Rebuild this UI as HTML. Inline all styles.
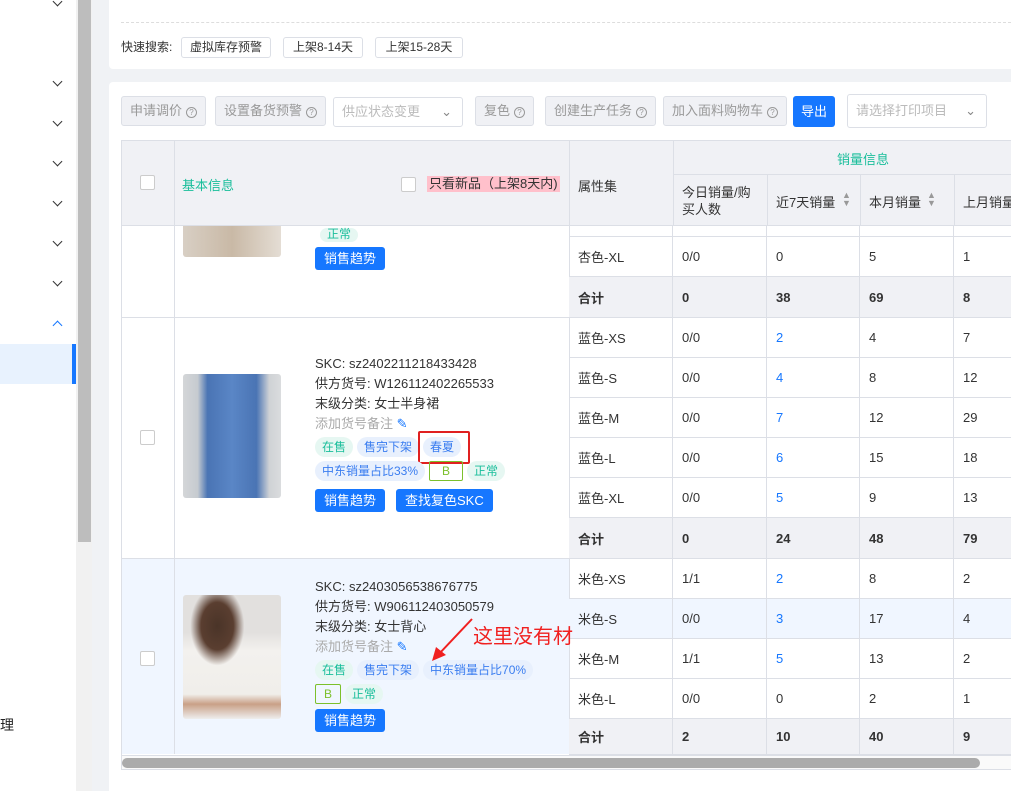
<!DOCTYPE html>
<html><head><meta charset="utf-8"><style>
*{box-sizing:border-box;margin:0;padding:0}
body{width:1011px;height:791px;overflow:hidden;position:relative;background:#f0f2f5;font-family:"Liberation Sans","Noto Sans CJK SC",sans-serif;font-size:13px;color:#333}
.a{position:absolute;white-space:nowrap}
.side{left:0;top:0;width:76px;height:791px;background:#fff}
.chev{position:absolute;left:54px;width:7px;height:7px;border-right:1.5px solid #333;border-bottom:1.5px solid #333;transform:rotate(45deg)}
.btn{position:absolute;height:30px;border:1px solid #dcdfe6;border-radius:3px;background:#f0f1f5;color:#999;line-height:28px;padding:0 8px;font-size:13px;white-space:nowrap}
.q{display:inline-block;width:11px;height:11px;border:1px solid #999;border-radius:50%;font-size:8px;line-height:9px;text-align:center;margin-left:4px;vertical-align:0}
.qb{position:absolute;top:37px;height:21px;border:1px solid #dcdfe6;border-radius:3px;line-height:19px;padding:0 6px;color:#333;background:#fff;white-space:nowrap;font-size:12px;text-align:center}
.r{position:absolute;left:569px;width:442px;display:flex;border-bottom:1px solid #dcdfe6}
.r div{border-right:1px solid #dcdfe6;padding-left:9px;display:flex;align-items:center;overflow:hidden;white-space:nowrap}
.r div:nth-child(1){width:104px}.r div:nth-child(2){width:94px}.r div:nth-child(3){width:93px}.r div:nth-child(4){width:94px}.r div:nth-child(5){width:57px;border-right:0}
.t{background:#f0f1f5;font-weight:bold}
.bl{color:#1677ff}
.cb{position:absolute;width:15px;height:15px;border:1px solid #ccc;background:#fff;border-radius:2px}
.tag{display:inline-block;height:20px;line-height:20px;border-radius:10px;padding:0 7px;font-size:12px;margin-right:4px}
.g{background:#e6f7f2;color:#19be9b}.b{background:#e8f0fd;color:#3a7df0}
.pb{display:inline-block;height:23px;line-height:23px;background:#1677ff;color:#fff;border-radius:3px;padding:0 9px;font-size:13px;margin-right:8px}
.info{position:absolute;left:315px;line-height:20px;font-size:13px}
.vl{position:absolute;width:1px;background:#dcdfe6}
</style></head><body>
<div class="a side"></div>
<div class="chev" style="top:-2px"></div>
<div class="chev" style="top:78px"></div>
<div class="chev" style="top:118px"></div>
<div class="chev" style="top:158px"></div>
<div class="chev" style="top:198px"></div>
<div class="chev" style="top:238px"></div>
<div class="chev" style="top:278px"></div>
<div class="chev" style="top:322px;transform:rotate(-135deg);border-color:#1677ff"></div>
<div class="a" style="left:0;top:344px;width:76px;height:40px;background:#e8f2fe;border-right:4px solid #1677ff"></div>
<div class="a" style="left:0;top:715px;font-size:14px;color:#222">理</div>
<div class="a" style="left:76px;top:0;width:16px;height:791px;background:#f1f1f1"></div>
<div class="a" style="left:78px;top:0;width:13px;height:542px;background:#bdbdbd"></div>

<div class="a" style="left:109px;top:0;width:902px;height:69px;background:#fff;border-radius:0 0 0 4px"></div>
<div class="a" style="left:121px;top:22px;width:890px;border-top:1px dashed #ddd"></div>
<div class="a" style="left:121px;top:39px;line-height:16px;font-size:12px">快速搜索:</div>
<div class="qb" style="left:181px;width:90px">虚拟库存预警</div>
<div class="qb" style="left:283px;width:80px">上架8-14天</div>
<div class="qb" style="left:375px;width:88px">上架15-28天</div>

<div class="a" style="left:109px;top:82px;width:902px;height:709px;background:#fff;border-radius:4px 0 0 0"></div>
<div class="btn" style="left:121px;top:96px">申请调价<span class="q">?</span></div>
<div class="btn" style="left:215px;top:96px">设置备货预警<span class="q">?</span></div>
<div class="btn" style="left:333px;top:97px;width:130px;background:#fff;color:#bbb">供应状态变更<span style="position:absolute;right:10px;color:#888">⌄</span></div>
<div class="btn" style="left:475px;top:96px">复色<span class="q">?</span></div>
<div class="btn" style="left:545px;top:96px">创建生产任务<span class="q">?</span></div>
<div class="btn" style="left:663px;top:96px">加入面料购物车<span class="q">?</span></div>
<div class="a" style="left:793px;top:96px;width:42px;height:31px;background:#1677ff;color:#fff;border-radius:3px;line-height:31px;text-align:center">导出</div>
<div class="btn" style="left:847px;top:94px;width:140px;height:34px;line-height:32px;background:#fff;color:#bbb">请选择打印项目<span style="position:absolute;right:10px;color:#888">⌄</span></div>

<!-- table -->
<div class="a" style="left:121px;top:140px;width:890px;height:630px;border:1px solid #dcdfe6;border-right:0"></div>
<div class="a" style="left:122px;top:141px;width:889px;height:85px;background:#f0f1f5;border-bottom:1px solid #dcdfe6"></div>
<div class="a" style="left:122px;top:558px;width:447px;height:196px;background:#f0f6ff"></div>
<div class="vl" style="left:174px;top:141px;height:613px"></div>
<div class="vl" style="left:569px;top:141px;height:613px"></div>
<div class="vl" style="left:673px;top:141px;height:85px"></div>
<div class="a" style="left:673px;top:174px;width:338px;border-top:1px solid #dcdfe6"></div>
<div class="vl" style="left:767px;top:174px;height:52px"></div>
<div class="vl" style="left:860px;top:174px;height:52px"></div>
<div class="vl" style="left:954px;top:174px;height:52px"></div>
<div class="cb" style="left:140px;top:175px"></div>
<div class="a" style="left:182px;top:175px;color:#19be9b">基本信息</div>
<div class="cb" style="left:401px;top:177px"></div>
<div class="a" style="left:427px;top:176px;background:#ffc0cb;padding:0 2px;line-height:16px">只看新品（上架8天内)</div>
<div class="a" style="left:578px;top:176px">属性集</div>
<div class="a" style="left:837px;top:149px;color:#19be9b">销量信息</div>
<div class="a" style="left:682px;top:184px;line-height:17px">今日销量/购<br>买人数</div>
<div class="a" style="left:776px;top:192px">近7天销量 <span style="color:#999;font-size:9px;position:absolute;left:66px;top:-1px;line-height:8px">▲<br>▼</span></div>
<div class="a" style="left:869px;top:192px">本月销量 <span style="color:#999;font-size:9px;position:absolute;left:58px;top:-1px;line-height:8px">▲<br>▼</span></div>
<div class="a" style="left:963px;top:192px">上月销量</div>

<div class="r" style="top:226px;height:11px"><div></div><div></div><div></div><div></div><div></div></div>
<div class="r" style="top:237px;height:40px"><div>杏色-XL</div><div>0/0</div><div>0</div><div>5</div><div>1</div></div>
<div class="r t" style="top:277px;height:41px"><div>合计</div><div>0</div><div>38</div><div>69</div><div>8</div></div>
<div class="r" style="top:318px;height:40px"><div>蓝色-XS</div><div>0/0</div><div class="bl">2</div><div>4</div><div>7</div></div>
<div class="r" style="top:358px;height:40px"><div>蓝色-S</div><div>0/0</div><div class="bl">4</div><div>8</div><div>12</div></div>
<div class="r" style="top:398px;height:40px"><div>蓝色-M</div><div>0/0</div><div class="bl">7</div><div>12</div><div>29</div></div>
<div class="r" style="top:438px;height:40px"><div>蓝色-L</div><div>0/0</div><div class="bl">6</div><div>15</div><div>18</div></div>
<div class="r" style="top:478px;height:40px"><div>蓝色-XL</div><div>0/0</div><div class="bl">5</div><div>9</div><div>13</div></div>
<div class="r t" style="top:518px;height:41px"><div>合计</div><div>0</div><div>24</div><div>48</div><div>79</div></div>
<div class="r" style="top:559px;height:40px"><div>米色-XS</div><div>1/1</div><div class="bl">2</div><div>8</div><div>2</div></div>
<div class="r" style="top:599px;height:40px;background:#f0f6ff"><div>米色-S</div><div>0/0</div><div class="bl">3</div><div>17</div><div>4</div></div>
<div class="r" style="top:639px;height:40px"><div>米色-M</div><div>1/1</div><div class="bl">5</div><div>13</div><div>2</div></div>
<div class="r" style="top:679px;height:40px"><div>米色-L</div><div>0/0</div><div>0</div><div>2</div><div>1</div></div>
<div class="r t" style="top:719px;height:36px"><div>合计</div><div>2</div><div>10</div><div>40</div><div>9</div></div>
<div class="a" style="left:122px;top:317px;width:447px;border-top:1px solid #dcdfe6"></div>
<div class="a" style="left:122px;top:558px;width:447px;border-top:1px solid #dcdfe6"></div>
<div class="a" style="left:122px;top:755px;width:889px;height:14px;background:#fafafa;border-top:1px solid #dcdfe6"></div>
<div class="a" style="left:122px;top:758px;width:858px;height:10px;background:#ababab;border-radius:5px"></div>

<!-- row1 partial -->
<div class="a" style="left:183px;top:226px;width:98px;height:31px;background:linear-gradient(90deg,#d8cfc4,#c9b9a6 50%,#e4ddd4);border-radius:0 0 3px 3px"></div>
<div class="a" style="left:320px;top:226px"><span class="tag g" style="height:14px;line-height:12px">正常</span></div>
<div class="a" style="left:315px;top:247px"><span class="pb">销售趋势</span></div>

<!-- row2 -->
<div class="cb" style="left:140px;top:430px"></div>
<div class="a" style="left:183px;top:374px;width:98px;height:124px;border-radius:3px;background:linear-gradient(90deg,#d4d6d8 0,#c6cbd0 15%,#4a74b4 25%,#5a86c6 50%,#4a74b4 75%,#cfd2d5 88%,#dadcde)"></div>
<div class="info" style="top:354px">SKC: sz2402211218433428<br>供方货号: W126112402265533<br>末级分类: 女士半身裙<br><span style="color:#aaa">添加货号备注 <span style="color:#1677ff">✎</span></span></div>
<div class="a" style="left:315px;top:437px"><span class="tag g">在售</span><span class="tag b">售完下架</span><span class="tag b">春夏</span></div>
<div class="a" style="left:418px;top:431px;width:52px;height:33px;border:2px solid #e02020;border-radius:2px"></div>
<div class="a" style="left:315px;top:461px"><span class="tag b">中东销量占比33%</span><span class="tag" style="border:1px solid #7cc02c;color:#7cc02c;border-radius:2px;padding:0 12px;height:20px;line-height:18px">B</span><span class="tag g">正常</span></div>
<div class="a" style="left:315px;top:489px"><span class="pb">销售趋势</span><span class="pb" style="margin-left:3px">查找复色SKC</span></div>

<!-- row3 -->
<div class="cb" style="left:140px;top:651px"></div>
<div class="a" style="left:183px;top:595px;width:98px;height:124px;border-radius:3px;background:radial-gradient(ellipse at 35% 25%,#4a3428 0,#5a3e30 18%,transparent 30%),linear-gradient(180deg,#e2e0de 0,#e2e0de 30%,#f3f1ee 45%,#f0eeea 80%,#c9a087 88%,#eeeeee)"></div>
<div class="info" style="top:577px">SKC: sz2403056538676775<br>供方货号: W906112403050579<br>末级分类: 女士背心<br><span style="color:#aaa">添加货号备注 <span style="color:#1677ff">✎</span></span></div>
<div class="a" style="left:315px;top:660px"><span class="tag g">在售</span><span class="tag b">售完下架</span><span class="tag b">中东销量占比70%</span></div>
<div class="a" style="left:315px;top:684px"><span class="tag" style="border:1px solid #7cc02c;color:#7cc02c;border-radius:2px;padding:0 8px;height:20px;line-height:18px">B</span><span class="tag g">正常</span></div>
<div class="a" style="left:315px;top:709px"><span class="pb">销售趋势</span></div>
<svg class="a" style="left:430px;top:617px" width="44" height="46"><line x1="42" y1="2" x2="8" y2="38" stroke="#f02020" stroke-width="2"/><polygon points="2,44 6,30 16,38" fill="#f02020"/></svg>
<div class="a" style="left:473px;top:620px;color:#f02020;font-size:20px;white-space:nowrap">这里没有材</div>
</body></html>
